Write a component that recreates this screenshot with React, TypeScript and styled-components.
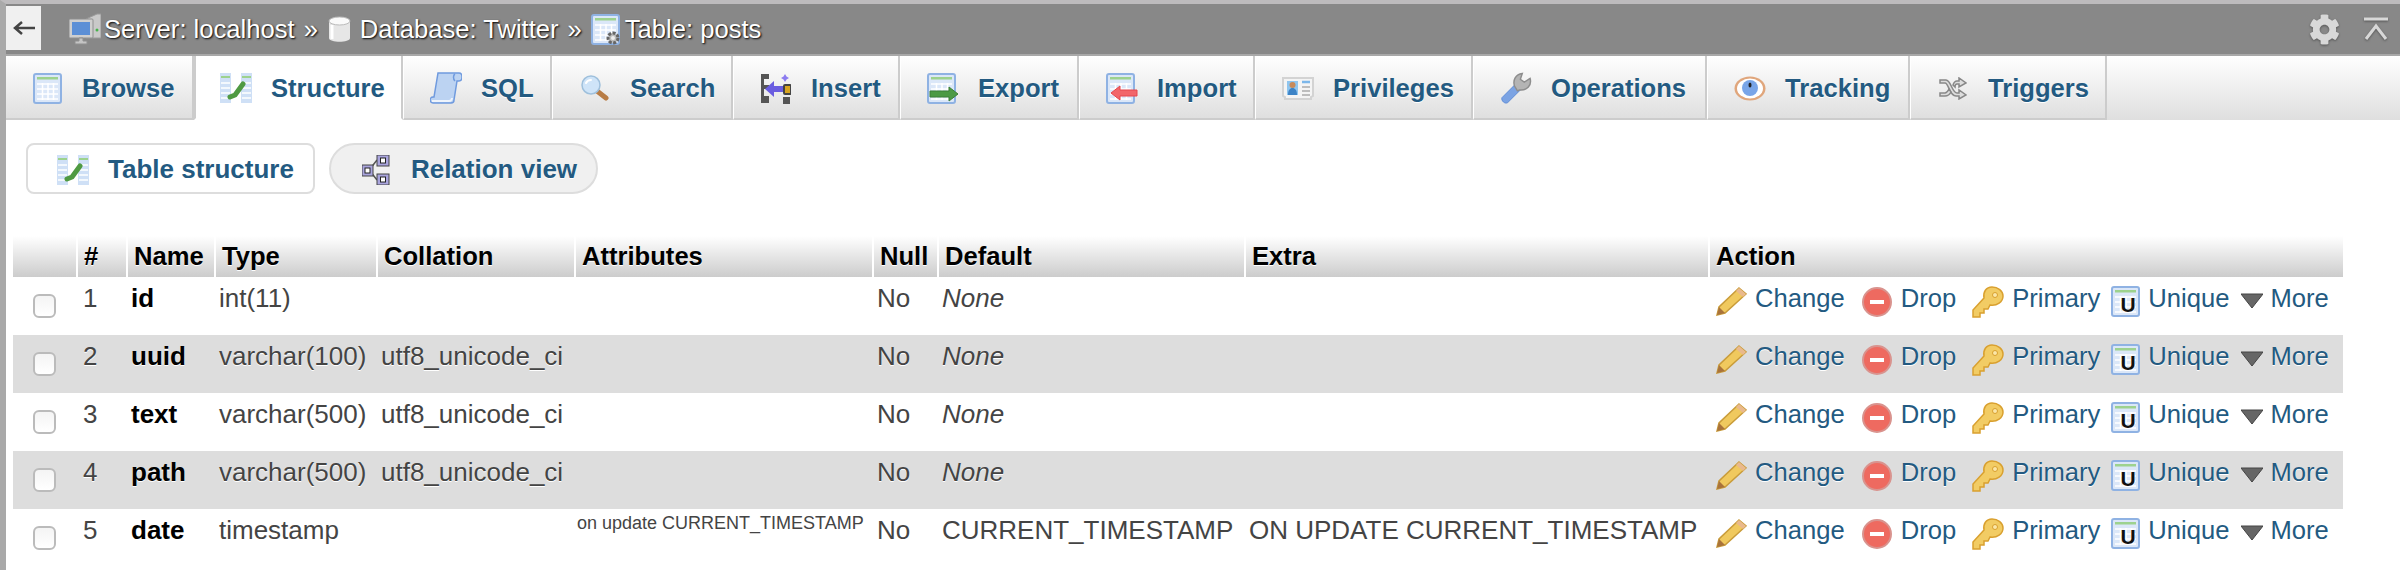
import React from "react";
import styled, { createGlobalStyle } from "styled-components";
import { FaCog } from "react-icons/fa";

const GlobalStyle = createGlobalStyle`
  html, body {
    margin: 0;
    padding: 0;
    background: #fff;
    font-family: "Liberation Sans", Arial, sans-serif;
  }
`;

const Page = styled.div`
  width: 2400px;
  height: 570px;
  box-sizing: border-box;
  overflow: hidden;
  background: #fff;
  border-top: 4px solid #bdbbbd;
  border-left: 6px solid #a9a9a9;
`;

const TopBar = styled.div`
  display: flex;
  align-items: center;
  height: 50px;
  background: #888;
  border-bottom: 2px solid #a8a8a8;
`;

const BackButton = styled.div`
  display: flex;
  align-items: center;
  justify-content: center;
  flex: none;
  align-self: flex-start;
  width: 35px;
  height: 44px;
  margin: 2px 28px 0 0;
  background: #f0f0f0;
`;

const Crumb = styled.span`
  display: flex;
  align-items: center;
  color: #fff;
  font-size: 25.6px;
  text-shadow: 1px 1px 2px #000;
  white-space: nowrap;
`;

const CrumbIcon = styled.span<{ $gap: number }>`
  display: flex;
  margin-right: ${({ $gap }) => $gap}px;
`;

const CrumbSep = styled(Crumb)`
  margin: 0 9px;
`;

const BarTools = styled.div`
  display: flex;
  align-items: center;
  gap: 24px;
  margin-left: auto;
  padding-right: 12px;
  color: #d8d8d8;
  filter: drop-shadow(0 1px 1px #555);
`;

const TabBar = styled.div`
  display: flex;
  height: 64px;
  background: linear-gradient(#fff, #dfdfdf);
`;

const Tab = styled.a<{ $active?: boolean; $w: number }>`
  display: flex;
  align-items: center;
  flex: none;
  box-sizing: border-box;
  width: ${({ $w }) => $w}px;
  height: 64px;
  padding: 2px 0 0 ${({ $active }) => ($active ? 24 : 26)}px;
  background: ${({ $active }) => ($active ? "#fff" : "linear-gradient(#fff, #dfdfdf)")};
  border-left: ${({ $active }) => ($active ? "2px solid #ccc" : "1px solid #fff")};
  border-right: 2px solid #ccc;
  border-bottom: 2px solid ${({ $active }) => ($active ? "#fff" : "#ccc")};
  color: #235a81;
  font-size: 25.6px;
  font-weight: 700;
  text-shadow: 0 1px 0 #fff;
  white-space: nowrap;
  &:first-child {
    border-left: 0;
    padding-left: 25px;
  }
`;

const TabIcon = styled.span`
  display: flex;
  justify-content: center;
  flex: none;
  width: 32px;
  margin-right: 19px;
`;

const SubTabs = styled.div`
  display: flex;
  gap: 14px;
  margin: 23px 0 42px 20px;
`;

const SubTab = styled.a<{ $active?: boolean }>`
  display: flex;
  align-items: center;
  box-sizing: border-box;
  height: 51px;
  padding: 2px 19px 0 29px;
  background: ${({ $active }) => ($active ? "#fff" : "#f0f0f0")};
  border: 2px solid #ddd;
  border-radius: ${({ $active }) => ($active ? 8 : 26)}px;
  color: #235a81;
  font-size: 26px;
  font-weight: 700;
  text-shadow: 0 1px 0 #fff;
  white-space: nowrap;
`;

const Table = styled.table`
  width: 2330px;
  margin-left: 7px;
  table-layout: fixed;
  border-collapse: collapse;
  border-spacing: 0;
`;

const Col = styled.col<{ $w: number }>`
  width: ${({ $w }) => $w}px;
`;

const Head = styled.th`
  box-sizing: border-box;
  height: 41px;
  padding: 0 0 2px 6px;
  background: linear-gradient(#fff, #ccc);
  border-left: 2px solid #fff;
  color: #000;
  font-size: 25.6px;
  font-weight: 700;
  line-height: 30px;
  text-align: left;
  text-shadow: 0 1px 0 #fff;
  white-space: nowrap;
  &:first-child {
    border-left: 0;
  }
`;

const Row = styled.tr<{ $even: boolean }>`
  height: 58px;
  background: ${({ $even }) => ($even ? "#ddd" : "#fff")};
`;

const Cell = styled.td<{ $bold?: boolean; $italic?: boolean }>`
  box-sizing: border-box;
  height: 58px;
  padding: 6px 0 0 4px;
  color: ${({ $bold }) => ($bold ? "#000" : "#444")};
  font-size: 26px;
  font-style: ${({ $italic }) => ($italic ? "italic" : "normal")};
  font-weight: ${({ $bold }) => ($bold ? 700 : 400)};
  line-height: 30px;
  text-shadow: 0 1px 0 #fff;
  vertical-align: top;
  white-space: nowrap;
`;

const NumberCell = styled(Cell)`
  padding-left: 6px;
`;

const CheckCell = styled(Cell)`
  padding: 17px 0 0 20px;
`;

const SmallCell = styled(Cell)`
  padding: 3px 0 0 2px;
  font-size: 18px;
  line-height: 22px;
`;

const Check = styled.input.attrs({ type: "checkbox" })`
  display: block;
  appearance: none;
  box-sizing: border-box;
  width: 23px;
  height: 24px;
  margin: 0;
  background: linear-gradient(#f4f4f4, #fff);
  border: 2px solid #bbb;
  border-radius: 6px;
`;

const Actions = styled.div`
  display: flex;
  padding-left: 3px;
`;

const ActionLink = styled.a<{ $after: number }>`
  display: flex;
  align-items: flex-start;
  margin-right: ${({ $after }) => $after}px;
  color: #235a81;
  font-size: 25.6px;
`;

const ActionIcon = styled.span<{ $gap: number; $top: number }>`
  display: flex;
  margin: ${({ $top }) => $top}px ${({ $gap }) => $gap}px 0 0;
`;

type IconProps = { w?: number; h?: number; children: React.ReactNode };

const Svg = ({ w = 32, h = 32, children }: IconProps) => (
  <svg width={w} height={h} viewBox={`0 0 ${w} ${h}`} fill="none">
    {children}
  </svg>
);

const Sheet = () => (
  <>
    <rect x="1" y="1" width="27" height="29" rx="2" fill="#dbe7f8" stroke="#8fb2e3" strokeWidth="2" />
    <rect x="4" y="4" width="21" height="2.5" fill="#9dd28e" />
    <path d="M4 11h21M4 16h21M4 21h21M4 26h21M9.5 10v17M15 10v17M20.5 10v17" stroke="#fff" strokeWidth="1.5" />
  </>
);

const BrowseIcon = () => (
  <Svg w={29} h={31}>
    <Sheet />
  </Svg>
);

const StructureIcon = () => (
  <Svg h={30}>
    <rect y="0" width="11" height="30" fill="#cfe0f6" />
    <rect x="21" y="0" width="11" height="30" fill="#cfe0f6" />
    <path d="M1 4h9M22 4h9" stroke="#9dd28e" strokeWidth="2" />
    <path d="M1 10h9M1 15h9M1 20h9M1 25h9M22 10h9M22 15h9M22 20h9M22 25h9" stroke="#fff" strokeWidth="1.5" />
    <path d="M10 24l5-2 8-11" stroke="#4f9a42" strokeWidth="5" strokeLinecap="round" strokeLinejoin="round" />
  </Svg>
);

const SqlIcon = () => (
  <Svg h={32}>
    <path d="M8 1h21c2 0 3 2 3 4s-1 4-3 4h-2l-3 19c0 2-1 3-3 3H3c-2 0-3-2-3-3s1-3 3-3h1z" fill="#bcd3f2" stroke="#6f9ade" strokeWidth="1.5" />
    <path d="M2 29h17c2 0 3-2 3-3" stroke="#eef4fc" strokeWidth="2" />
    <path d="M25 2c-2 1-2 5 0 7" stroke="#6f9ade" strokeWidth="1.5" />
  </Svg>
);

const SearchIcon = () => (
  <Svg w={28} h={26}>
    <path d="M16 16l9 7" stroke="#b87c45" strokeWidth="5" strokeLinecap="round" />
    <circle cx="10" cy="10" r="9" fill="#cfe4f8" stroke="#9fc0dc" strokeWidth="1.5" />
    <path d="M5 8c1-2 3-3 5-3" stroke="#fff" strokeWidth="2" strokeLinecap="round" />
  </Svg>
);

const InsertIcon = () => (
  <Svg w={30} h={31}>
    <path d="M0 1h8v5H3v6h5v4H3v7h5v7H0z" fill="#555" />
    <rect x="23" y="12" width="7" height="9" rx="1" fill="#d9a520" stroke="#444" strokeWidth="2" />
    <path d="M4 16l9-8v5h9v6h-9v5z" fill="#6a5de0" />
    <path d="M24 1l1.5 2.5L28 5l-2.500 1.500L24 9l-1.500-2.500L20 5l2.500-1.500z" fill="#8c7cf0" />
    <rect x="22" y="24" width="7" height="7" fill="#555" />
  </Svg>
);

const ExportIcon = () => (
  <Svg h={31}>
    <Sheet />
    <path d="M3 18h19v-4l9 7-9 7v-4H3z" fill="#4c9a44" stroke="#3d7f36" strokeWidth="1" />
  </Svg>
);

const ImportIcon = () => (
  <Svg h={31}>
    <Sheet />
    <path d="M31 17H14v-4l-9 7 9 7v-4h17z" fill="#f2666a" stroke="#e6474c" strokeWidth="1" />
  </Svg>
);

const PrivilegesIcon = () => (
  <Svg h={23}>
    <path d="M1 1h30v18l-2 1v2H3v-2l-2-1z" fill="#f4f4f4" stroke="#d3d3d3" strokeWidth="2" />
    <rect x="5" y="4" width="11" height="14" fill="#8ec5ef" />
    <circle cx="10.500" cy="8" r="3" fill="#c88a5a" />
    <path d="M6 18c0-5 2-7 4.500-7s4.500 2 4.500 7z" fill="#3d83c6" />
    <path d="M20 5h8" stroke="#7cb7ea" strokeWidth="2.500" />
    <path d="M20 10h8M20 14h8M20 18h8" stroke="#bdbdbd" strokeWidth="2" />
  </Svg>
);

const OperationsIcon = () => (
  <Svg w={33} h={32}>
    <path d="M2 26L15 13l6 5L8 31c-3 2-7-2-6-5z" fill="#7ba3e3" stroke="#5e8bd6" strokeWidth="1" />
    <path d="M15 14c-2-6 1-12 8-13l-2 6 4 3 6-4c2 7-3 13-11 12l-2 1z" fill="#b4b4b4" stroke="#8d8d8d" strokeWidth="1.500" />
  </Svg>
);

const EyeIcon = () => (
  <Svg h={25}>
    <ellipse cx="16" cy="12.500" rx="15.500" ry="12" fill="#e0a67c" />
    <ellipse cx="16" cy="12.500" rx="13" ry="10" fill="#fff" />
    <circle cx="16" cy="12" r="8" fill="#79a5e8" />
    <ellipse cx="16" cy="9" rx="1.500" ry="2.500" fill="#222" />
  </Svg>
);

const TriggersIcon = () => (
  <Svg w={28} h={23}>
    <path d="M1 3h6c5 0 6 13 11 13h2v-3l7 5-7 4v-3h-3C10 19 10 6 6 6H1z" fill="#ddd" stroke="#888" strokeWidth="1.500" />
    <path d="M1 16h5c2 0 3-2 4-4l2 3c-1 2-3 4-6 4H1zM14 8c1-3 2-4 4-4h2V1l7 5-7 4V7h-2c-1 0-2 1-2 3z" fill="#ddd" stroke="#888" strokeWidth="1.500" />
  </Svg>
);

const RelationIcon = () => (
  <Svg w={28} h={30}>
    <path d="M8 14L15 5M8 16l7 9" stroke="#555" strokeWidth="1.500" />
    <rect x="15" y="0" width="12" height="11" fill="#a9a4dd" stroke="#444" />
    <rect x="18.500" y="3" width="5" height="5" fill="#fff" stroke="#222" />
    <rect x="0" y="10" width="11" height="11" fill="#a9a4dd" stroke="#444" />
    <rect x="3" y="13" width="5" height="5" fill="#fff" stroke="#222" />
    <rect x="15" y="19" width="12" height="11" fill="#a9a4dd" stroke="#444" />
    <rect x="18.500" y="22" width="5" height="5" fill="#fff" stroke="#222" />
  </Svg>
);

const ServerIcon = () => (
  <Svg h={32}>
    <path d="M17 6l11-5h4v24H17z" fill="#c9c9c9" stroke="#9a9a9a" />
    <rect x="0" y="6" width="24" height="19" rx="1" fill="#cfcfcf" stroke="#8f8f8f" />
    <rect x="3" y="9" width="18" height="13" fill="#5c8fd6" />
    <path d="M10 25h4v3h4v3H6v-3h4z" fill="#c4c4c4" stroke="#8f8f8f" />
    <circle cx="28" cy="17" r="1.500" fill="#47b34c" />
  </Svg>
);

const DatabaseIcon = () => (
  <Svg w={25} h={27}>
    <path d="M2 5v17c0 5 21 5 21 0V5z" fill="#e6e6e6" />
    <ellipse cx="12.500" cy="5" rx="10.500" ry="4" fill="#fafafa" stroke="#bbb" />
    <path d="M5 9v14" stroke="#fff" strokeWidth="3" />
  </Svg>
);

const TablePropsIcon = () => (
  <Svg w={30} h={31}>
    <Sheet />
    <circle cx="22" cy="24" r="5" fill="#bbb" stroke="#666" strokeWidth="3" strokeDasharray="3 1.500" />
    <circle cx="22" cy="24" r="2" fill="#eee" />
  </Svg>
);

const PencilIcon = () => (
  <Svg w={31} h={29}>
    <path d="M23 1l7 6L9 26l-8 2 2-8z" fill="#f0c95e" stroke="#c99c3a" strokeWidth="1.500" />
    <path d="M1 28l2-8 6 6z" fill="#a9733b" />
    <path d="M23 1l7 6-3 3-7-6z" fill="#e9b98d" />
  </Svg>
);

const DropIcon = () => (
  <Svg w={30} h={30}>
    <circle cx="15" cy="15" r="14" fill="#ee6a60" stroke="#d9938e" strokeWidth="2" />
    <rect x="8" y="13" width="14" height="4" fill="#fff" />
  </Svg>
);

const KeyIcon = () => (
  <Svg h={32}>
    <path d="M20 1c-6 0-9 5-8 11L1 24v7h7v-4h4v-4h4l2-4c7 1 13-3 13-9 0-5-5-9-11-9z" fill="#f2cc64" stroke="#d9a02f" strokeWidth="1.500" />
    <circle cx="23" cy="9" r="2.500" fill="#fbe7a8" stroke="#d9a02f" />
  </Svg>
);

const UniqueIcon = () => (
  <Svg w={29} h={31}>
    <Sheet />
    <text x="17" y="26" fill="#111" fontFamily="Liberation Sans, Arial, sans-serif" fontSize="21" fontWeight="700" textAnchor="middle">U</text>
  </Svg>
);

const MoreIcon = () => (
  <Svg w={22} h={16}>
    <path d="M0 1h22L11 15z" fill="#666" stroke="#444" strokeLinejoin="round" />
  </Svg>
);

const tabs = [
  { label: "Browse", icon: <BrowseIcon />, w: 188 },
  { label: "Structure", icon: <StructureIcon />, w: 209, active: true },
  { label: "SQL", icon: <SqlIcon />, w: 149 },
  { label: "Search", icon: <SearchIcon />, w: 181 },
  { label: "Insert", icon: <InsertIcon />, w: 167 },
  { label: "Export", icon: <ExportIcon />, w: 179 },
  { label: "Import", icon: <ImportIcon />, w: 176 },
  { label: "Privileges", icon: <PrivilegesIcon />, w: 218 },
  { label: "Operations", icon: <OperationsIcon />, w: 234 },
  { label: "Tracking", icon: <EyeIcon />, w: 203 },
  { label: "Triggers", icon: <TriggersIcon />, w: 197 },
];

const columns = [
  { label: "", w: 64 },
  { label: "#", w: 50 },
  { label: "Name", w: 88 },
  { label: "Type", w: 162 },
  { label: "Collation", w: 198 },
  { label: "Attributes", w: 298 },
  { label: "Null", w: 65 },
  { label: "Default", w: 307 },
  { label: "Extra", w: 464 },
  { label: "Action", w: 634 },
];

const rows = [
  { name: "id", type: "int(11)", collation: "" },
  { name: "uuid", type: "varchar(100)", collation: "utf8_unicode_ci" },
  { name: "text", type: "varchar(500)", collation: "utf8_unicode_ci" },
  { name: "path", type: "varchar(500)", collation: "utf8_unicode_ci" },
  {
    name: "date",
    type: "timestamp",
    collation: "",
    attributes: "on update CURRENT_TIMESTAMP",
    fallback: "CURRENT_TIMESTAMP",
    extra: "ON UPDATE CURRENT_TIMESTAMP",
  },
];

const actions = [
  { label: "Change", icon: <PencilIcon />, gap: 8, after: 17, top: 4 },
  { label: "Drop", icon: <DropIcon />, gap: 9, after: 16, top: 4 },
  { label: "Primary", icon: <KeyIcon />, gap: 8, after: 11, top: 3 },
  { label: "Unique", icon: <UniqueIcon />, gap: 8, after: 12, top: 3 },
  { label: "More", icon: <MoreIcon />, gap: 7, after: 0, top: 10 },
];

const App: React.FC = () => (
  <Page>
    <GlobalStyle />
    <TopBar>
      <BackButton>
        <Svg w={22} h={16}>
          <path d="M22 8H3M9 2L2 8l7 6" stroke="#444" strokeWidth="2.500" />
        </Svg>
      </BackButton>
      <Crumb>
        <CrumbIcon $gap={3}><ServerIcon /></CrumbIcon>
        Server: localhost
      </Crumb>
      <CrumbSep>»</CrumbSep>
      <Crumb>
        <CrumbIcon $gap={8}><DatabaseIcon /></CrumbIcon>
        Database: Twitter
      </Crumb>
      <CrumbSep>»</CrumbSep>
      <Crumb>
        <CrumbIcon $gap={4}><TablePropsIcon /></CrumbIcon>
        Table: posts
      </Crumb>
      <BarTools>
        <FaCog size={31} />
        <Svg w={24} h={24}>
          <path d="M0 2h24" stroke="currentColor" strokeWidth="3" />
          <path d="M2 22L12 9l10 13" stroke="currentColor" strokeWidth="3" />
        </Svg>
      </BarTools>
    </TopBar>
    <TabBar>
      {tabs.map((tab) => (
        <Tab key={tab.label} $active={tab.active} $w={tab.w}>
          <TabIcon>{tab.icon}</TabIcon>
          {tab.label}
        </Tab>
      ))}
    </TabBar>
    <SubTabs>
      <SubTab $active>
        <TabIcon><StructureIcon /></TabIcon>
        Table structure
      </SubTab>
      <SubTab>
        <TabIcon><RelationIcon /></TabIcon>
        Relation view
      </SubTab>
    </SubTabs>
    <Table>
      <colgroup>
        {columns.map((col) => (
          <Col key={col.label} $w={col.w} />
        ))}
      </colgroup>
      <thead>
        <tr>
          {columns.map((col) => (
            <Head key={col.label}>{col.label}</Head>
          ))}
        </tr>
      </thead>
      <tbody>
        {rows.map((row, i) => (
          <Row key={row.name} $even={i % 2 === 1}>
            <CheckCell><Check /></CheckCell>
            <NumberCell>{i + 1}</NumberCell>
            <Cell $bold>{row.name}</Cell>
            <Cell>{row.type}</Cell>
            <Cell>{row.collation}</Cell>
            <SmallCell>{row.attributes}</SmallCell>
            <Cell>No</Cell>
            {row.fallback ? <Cell>{row.fallback}</Cell> : <Cell $italic>None</Cell>}
            <Cell>{row.extra}</Cell>
            <Cell>
              <Actions>
                {actions.map((action) => (
                  <ActionLink key={action.label} $after={action.after}>
                    <ActionIcon $gap={action.gap} $top={action.top}>{action.icon}</ActionIcon>
                    {action.label}
                  </ActionLink>
                ))}
              </Actions>
            </Cell>
          </Row>
        ))}
      </tbody>
    </Table>
  </Page>
);

export default App;
